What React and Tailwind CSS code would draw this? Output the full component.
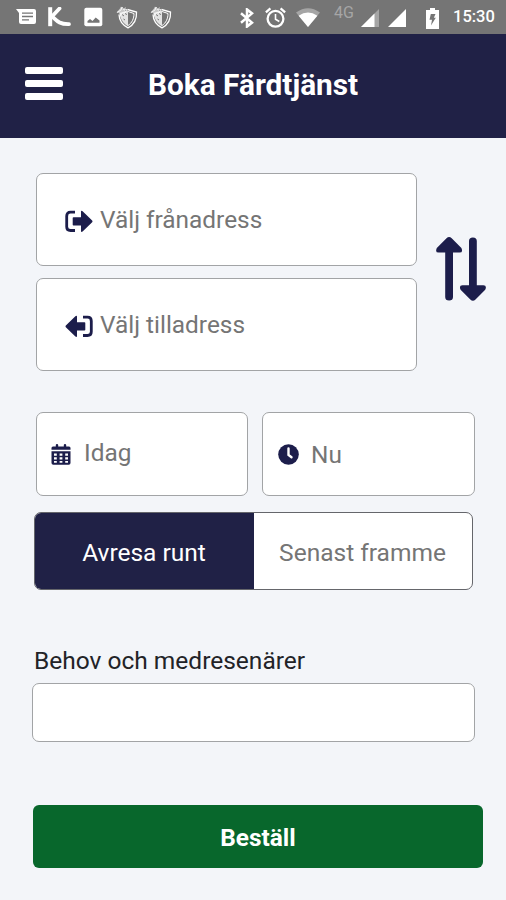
function StatusBar() {
    return (
        <div className="flex h-[34px] items-center bg-[#757575] pl-4 text-white">
            {/* Notifications */}
            <svg className="h-[18px] w-5 shrink-0" viewBox="0 0 20 18" fill="currentColor">
                <path d="M0 1h18q2 0 2 2v11q0 2-2 2H5q-2 0-2-2V5z" />
                <path d="M6 5.2h11M6 8.5h11M6 11.8h7" stroke="#757575" strokeWidth="1.3" />
            </svg>
            <svg className="ml-3 h-5 w-[23px] shrink-0" viewBox="0 0 23 20" fill="none" stroke="currentColor" strokeWidth="4">
                <path d="M2.200.2v19" />
                <path d="M11.500 1.500 4 9.500c4 3 6 8 17 7.700" strokeWidth="3.800" strokeLinecap="round" />
            </svg>
            <svg className="ml-[13px] h-5 w-[19px] shrink-0" viewBox="0 0 19 20" fill="currentColor">
                <rect x=".3" y=".8" width="18" height="18.5" rx="2" />
                <path d="M3.500 15.800V14l2.500-2 2.500 2 3.200-3.500 3.800 3v2.300z" fill="#757575" />
            </svg>
            <ShieldIcon className="ml-[13px] h-[23px] w-[22px] shrink-0" />
            <ShieldIcon className="ml-3 h-[23px] w-[22px] shrink-0" />

            {/* System */}
            <svg className="mt-px ml-[68px] h-5 w-[14px] shrink-0" viewBox="0 0 14 20" fill="none" stroke="currentColor" strokeWidth="2.5">
                <path d="M1 5.200 12 14.600l-5 4V1.400l5 4L1 14.800" />
            </svg>
            <svg className="ml-[11px] h-[21px] w-[21px] shrink-0" viewBox="0 0 21 21" fill="none" stroke="currentColor" strokeWidth="2.3">
                <circle cx="10.5" cy="11.8" r="7.9" />
                <path d="M10.500 7v5.200l3.800 2.300" strokeWidth="1.600" />
                <path d="M.9 5.300 5.400 1.400M20.100 5.300l-4.500-3.900" />
            </svg>
            <svg className="ml-[10px] h-[19px] w-6 shrink-0" viewBox="0 0 24 19" fill="currentColor">
                <path d="M0 4.500q12-8.500 24 0L12 19z" opacity=".35" />
                <path d="M2.600 7.700q9.400-6.400 18.800 0L12 19z" />
            </svg>
            <span className="mb-2 ml-[14px] w-[21px] text-[16px] leading-none text-[#a6a6a6]">4G</span>
            <svg className="mt-0.5 ml-[6px] h-[18px] w-[18px] shrink-0" viewBox="0 0 18 18" fill="currentColor">
                <path d="M0 18 18 0v18z" opacity=".35" />
                <path d="M0 18 13.500 4.500V18z" />
            </svg>
            <svg className="mt-0.5 ml-[9px] h-[18px] w-[18px] shrink-0" viewBox="0 0 18 18" fill="currentColor">
                <path d="M0 18 18 0v18z" />
            </svg>
            <svg className="mt-0.5 ml-5 h-[21px] w-[13px] shrink-0" viewBox="0 0 13 21" fill="currentColor">
                <path d="M4 0h5v2h4v19H0V2h4z" />
                <path d="M4.800 6h4.700L7.800 9.800h2L5 17.500l1-5.800H3.500z" fill="#757575" />
            </svg>
            <span className="mt-px ml-[14px] text-[16.5px] leading-none font-medium">15:30</span>
        </div>
    );
}

function ShieldIcon({ className }) {
    return (
        <svg className={className} viewBox="0 0 22 23" fill="none" stroke="currentColor">
            <path d="M11.500 3.500 20.500 6c.4 7-2 12.500-8.500 15.800C6.500 19 3.200 14.500 3 8.500" strokeWidth="1.3" />
            <path d="M3.500 7 12 4.500v15.700C7.500 17.500 4.500 14 3.500 7Z" fill="currentColor" opacity=".8" stroke="none" />
            <path d="M12 5.500l6 2c0 5-2 9.500-6 12" strokeWidth="1" />
            <path d="M.5 6.500 4 2.500l1-2 2 2.500L10 1l-1 4 2 3-4-1-3 4-.5-4z" fill="currentColor" opacity=".6" stroke="none" />
            <path d="M1 6.500 5 4l1-3 2 3 3-.5-2 3" strokeWidth=".8" />
            <path d="M6 8.500l2 1.500M7.500 13l1.500 1M9.500 7l1 2" stroke="#757575" strokeWidth="1" />
        </svg>
    );
}

function FromIcon() {
    return (
        <svg className="mt-[3px] h-[23px] w-7 shrink-0" viewBox="0 0 28 23" fill="#1c1d4b">
            <path d="M10 2.200H5.500Q1.700 2.200 1.700 6v10.700q0 3.800 3.800 3.800H10" fill="none" stroke="#1c1d4b" strokeWidth="2.8" />
            <path d="M8.500 7.200H16V1.800q0-1.800 1.600-.6l9.300 9q1.200 1.200 0 2.400l-9.300 9q-1.600 1.200-1.600-.6v-5.400H8.500q-.8 0-.8-.8V8q0-.8.8-.8z" />
        </svg>
    );
}

function ToIcon() {
    return (
        <svg className="mt-1 h-[23px] w-7 shrink-0" viewBox="0 0 28 23" fill="#1c1d4b">
            <path d="M18 2.200h4.500q3.800 0 3.800 3.800v10.700q0 3.800-3.800 3.800H18" fill="none" stroke="#1c1d4b" strokeWidth="2.8" />
            <path d="M19.500 7.200H12V1.800q0-1.800-1.600-.6l-9.300 9q-1.200 1.200 0 2.400l9.300 9q1.600 1.200 1.600-.6v-5.400h7.500q.8 0 .8-.8V8q0-.8-.8-.8z" />
        </svg>
    );
}

function SwapIcon() {
    return (
        <svg className="h-16 w-[50px]" viewBox="0 0 50 64" fill="#1c1d4b">
            <path d="M10.500 1.200q2.600-2.400 5.200 0L25.400 11q2 4.600-1.800 4.600H17V60q0 3.500-3.900 3.500T9.200 60V15.600H2.600Q-1.200 15.600.8 11z" />
            <path d="M34.300 62.600q2.600 2.400 5.200 0L49.200 52.800q2-4.600-1.800-4.600h-6.600V4q0-3.500-3.900-3.500T33 4v44.200h-6.600q-3.800 0-1.800 4.600z" />
        </svg>
    );
}

function CalendarIcon() {
    return (
        <svg className="h-[21px] w-5 shrink-0" viewBox="0 0 20 21" fill="#1c1d4b">
            <path d="M2 2.500h2.800V1q0-1 1.200-1t1.200 1v1.500h5.600V1q0-1 1.200-1t1.200 1v1.500H18q1.500 0 1.500 1.500v1.700H.5V4Q.5 2.500 2 2.500z" />
            <path d="M.5 7.300h19V19q0 1.800-1.800 1.800H2.300Q.5 20.800.5 19z" />
            <path
                d="M3 9.500h2.800v2.200H3zM8.600 9.500h2.800v2.200H8.600zM14.200 9.500H17v2.200h-2.800zM3 13.300h2.800v2.200H3zM8.600 13.300h2.800v2.200H8.600zM14.200 13.300H17v2.200h-2.800zM3 17h2.800v1.800H3zM8.600 17h2.800v1.800H8.600zM14.200 17H17v1.800h-2.800z"
                fill="#fff"
            />
        </svg>
    );
}

function ClockIcon() {
    return (
        <svg className="h-[21px] w-[21px] shrink-0" viewBox="0 0 21 21">
            <circle cx="10.5" cy="10.5" r="10.3" fill="#1c1d4b" />
            <path d="M10.500 4.500V11l3 2.300" fill="none" stroke="#fff" strokeWidth="2.4" strokeLinecap="round" />
        </svg>
    );
}

export default function App() {
    return (
        <div className="h-[900px] w-[506px] overflow-hidden bg-[#f3f5f9] font-['Roboto',sans-serif] text-[24.4px] leading-7 text-[#757575]">
            <StatusBar />

            <header className="flex h-[104px] items-center bg-[#202146] pl-[25px]">
                <button type="button" aria-label="Meny" className="flex w-[38px] flex-col gap-[6px] pb-[5px]">
                    <span className="h-[7px] rounded-[2px] bg-white" />
                    <span className="h-[7px] rounded-[2px] bg-white" />
                    <span className="h-[7px] rounded-[2px] bg-white" />
                </button>
                <h1 className="ml-[85px] pb-[3px] text-[29.8px] leading-8 font-bold whitespace-nowrap text-white">Boka Färdtjänst</h1>
            </header>

            <main className="pt-[35px]">
                {/* Addresses */}
                <div className="flex items-center pl-9">
                    <div className="flex w-[381px] flex-col gap-3">
                        <div className="flex h-[93px] items-center rounded-[7px] border border-[#a2a4a6] bg-white pl-7">
                            <FromIcon />
                            <span className="ml-[7px]">Välj frånadress</span>
                        </div>
                        <div className="flex h-[93px] items-center rounded-[7px] border border-[#a2a4a6] bg-white pl-7">
                            <ToIcon />
                            <span className="mt-px ml-[7px]">Välj tilladress</span>
                        </div>
                    </div>
                    <button type="button" aria-label="Byt riktning" className="mb-[7px] ml-[19px]">
                        <SwapIcon />
                    </button>
                </div>

                {/* Date and time */}
                <div className="mt-[41px] flex gap-[14px] pl-9">
                    <div className="flex h-[84px] w-[212px] items-center rounded-[7px] border border-[#a2a4a6] bg-white pl-[14px]">
                        <CalendarIcon />
                        <span className="mb-[3px] ml-[13px]">Idag</span>
                    </div>
                    <div className="flex h-[84px] w-[213px] items-center rounded-[7px] border border-[#a2a4a6] bg-white pl-[15px]">
                        <ClockIcon />
                        <span className="mt-[2px] ml-3">Nu</span>
                    </div>
                </div>

                <div className="mt-4 ml-[34px] flex h-[78px] w-[439px] overflow-hidden rounded-[7px] border border-[#65666b] bg-white text-[24.5px]">
                    <button type="button" className="-m-px w-[220px] bg-[#202146] pt-[3px] text-white">
                        Avresa runt
                    </button>
                    <button type="button" className="flex-1 pt-[3px]">
                        Senast framme
                    </button>
                </div>

                {/* Needs and companions */}
                <label className="mt-[57px] block pl-[34px] text-[24.5px] text-[#222327]">Behov och medresenärer</label>
                <div className="mt-2 ml-8 h-[59px] w-[443px] rounded-[7px] border border-[#a2a4a6] bg-white" />

                <button type="button" className="mt-[63px] ml-[33px] h-[63px] w-[450px] rounded-md bg-[#08672c] pt-[2px] font-bold text-white">
                    Beställ
                </button>
            </main>
        </div>
    );
}
